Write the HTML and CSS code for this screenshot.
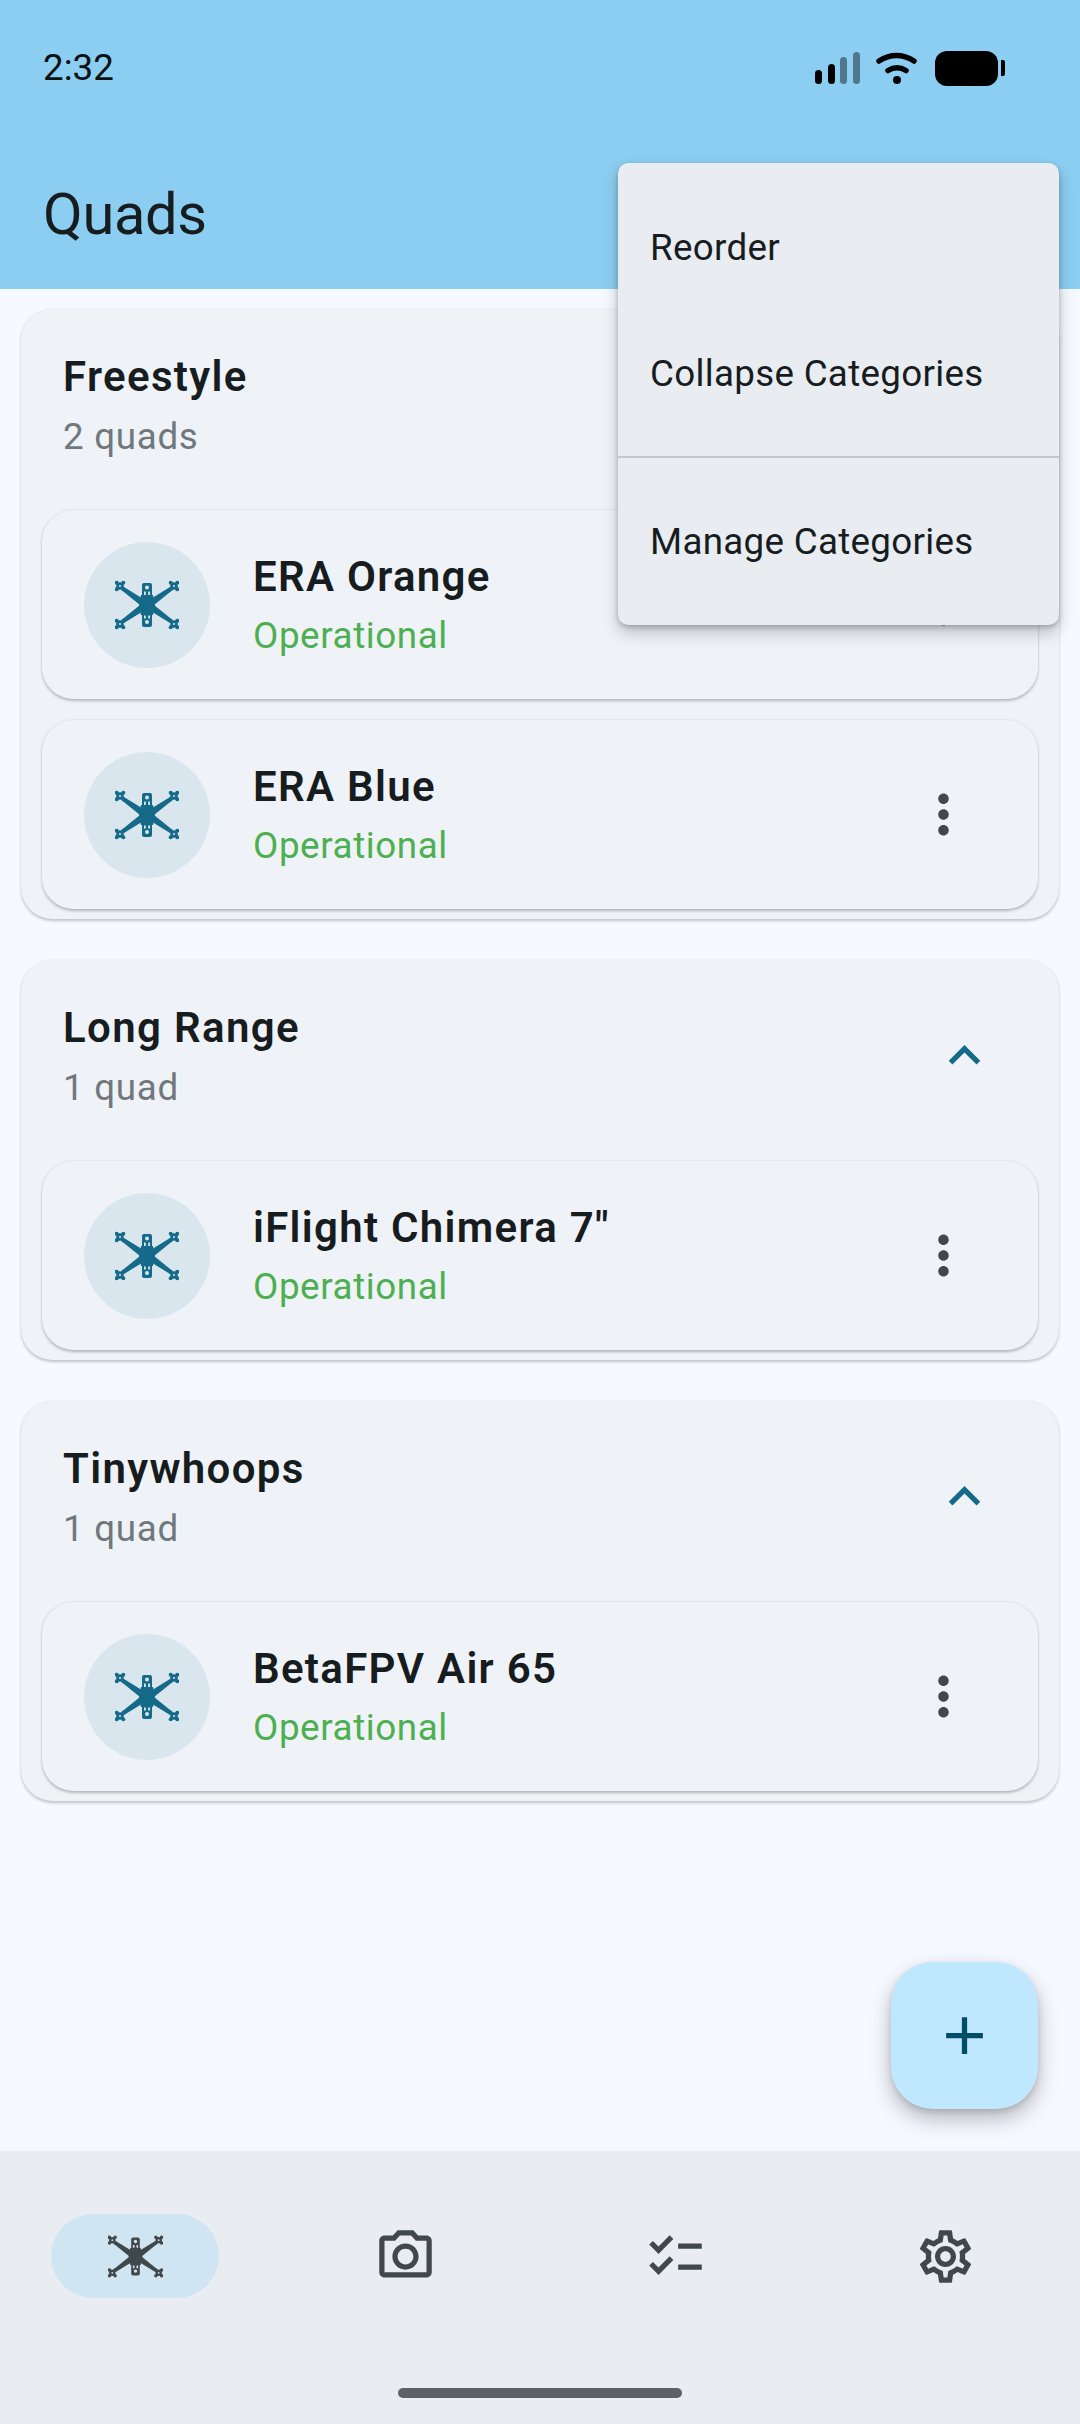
FILE: index.html
```html
<!DOCTYPE html>
<html lang="en">
<head>
<meta charset="utf-8">
<title>Quads</title>
<link rel="stylesheet" href="styles.css">
</head>
<body>
<svg class="defs" xmlns="http://www.w3.org/2000/svg">
  <symbol id="motor" viewBox="-7 -7 14 14" overflow="visible">
    <circle cx="-3.300" cy="-3.300" r="2"/><circle cx="3.300" cy="-3.300" r="2"/><circle cx="-3.300" cy="3.300" r="2"/><circle cx="3.300" cy="3.300" r="2"/>
    <path fill-rule="evenodd" d="M-3.800 0a3.800 3.800 0 1 0 7.600 0a3.800 3.800 0 1 0-7.600 0Z M-1 0a1 1 0 1 0 2 0a1 1 0 1 0-2 0Z"/>
  </symbol>
  <symbol id="drone" viewBox="-32 -26 64 52">
    <g fill="currentColor">
      <path fill-rule="evenodd" d="M-3-22H3Q5-22 5-20V20Q5 22 3 22H-3Q-5 22-5 20V-20Q-5-22-3-22Z M-2-17.500a2 2 0 1 0 4 0a2 2 0 1 0-4 0Z M-3-13.500h1.800v3.400H-3Z M1.200-13.500H3v3.400H1.200Z M-3 10.600h1.800v3H-3Z M1.200 10.600H3v3H1.200Z M-2 17a2 2 0 1 0 4 0a2 2 0 1 0-4 0Z"/>
      <path d="M-6-10H6L8 0 6 10H-6L-8 0Z"/>
      <path d="M-6-7.500-23-18-25-14.500-7 0Z M6-7.500 23-18 25-14.500 7 0Z M-6 7.500-23 18-25 14.500-7 0Z M6 7.500 23 18 25 14.500 7 0Z"/>
      <use href="#motor" x="-34" y="-26" width="14" height="14"/>
      <use href="#motor" x="20" y="-26" width="14" height="14"/>
      <use href="#motor" x="-34" y="12" width="14" height="14"/>
      <use href="#motor" x="20" y="12" width="14" height="14"/>
    </g>
  </symbol>
  <symbol id="chev" viewBox="0 0 24 24"><path d="M12 8l-6 6 1.410 1.410L12 10.830l4.590 4.580L18 14z"/></symbol>
  <symbol id="more" viewBox="0 0 24 24"><path d="M12 8c1.100 0 2-.9 2-2s-.9-2-2-2-2 .9-2 2 .9 2 2 2zm0 2c-1.100 0-2 .9-2 2s.9 2 2 2 2-.9 2-2-.9-2-2-2zm0 6c-1.100 0-2 .9-2 2s.9 2 2 2 2-.9 2-2-.9-2-2-2z"/></symbol>
</svg>

<header class="appbar">
  <div class="status">
    <span class="time">2:32</span>
    <div class="status-icons">
      <div class="signal">
        <i class="bar b1"></i><i class="bar b2"></i><i class="bar b3 dim"></i><i class="bar b4 dim"></i>
      </div>
      <svg class="wifi" viewBox="0 0 44 34"><path d="M4 10Q21.500-1 39 10M13 19.500Q22 14 31 19.500" fill="none" stroke="#000" stroke-width="5.500" stroke-linecap="round"/><circle cx="22" cy="29" r="4"/></svg>
      <div class="battery"><i class="cell"></i><i class="nub"></i></div>
    </div>
  </div>
  <h1 class="title">Quads</h1>
</header>

<main class="list">
  <section class="group">
    <div class="group-head">
      <div><h2 class="group-name">Freestyle</h2><p class="group-count">2 quads</p></div>
      <svg class="chev"><use href="#chev"/></svg>
    </div>
    <article class="quad">
      <div class="avatar"><svg class="drone"><use href="#drone"/></svg></div>
      <div class="quad-text"><h3 class="quad-name">ERA Orange</h3><p class="quad-state">Operational</p></div>
      <svg class="more"><use href="#more"/></svg>
    </article>
    <article class="quad">
      <div class="avatar"><svg class="drone"><use href="#drone"/></svg></div>
      <div class="quad-text"><h3 class="quad-name">ERA Blue</h3><p class="quad-state">Operational</p></div>
      <svg class="more"><use href="#more"/></svg>
    </article>
  </section>
  <section class="group">
    <div class="group-head">
      <div><h2 class="group-name">Long Range</h2><p class="group-count">1 quad</p></div>
      <svg class="chev"><use href="#chev"/></svg>
    </div>
    <article class="quad">
      <div class="avatar"><svg class="drone"><use href="#drone"/></svg></div>
      <div class="quad-text"><h3 class="quad-name">iFlight Chimera 7"</h3><p class="quad-state">Operational</p></div>
      <svg class="more"><use href="#more"/></svg>
    </article>
  </section>
  <section class="group">
    <div class="group-head">
      <div><h2 class="group-name">Tinywhoops</h2><p class="group-count">1 quad</p></div>
      <svg class="chev"><use href="#chev"/></svg>
    </div>
    <article class="quad">
      <div class="avatar"><svg class="drone"><use href="#drone"/></svg></div>
      <div class="quad-text"><h3 class="quad-name">BetaFPV Air 65</h3><p class="quad-state">Operational</p></div>
      <svg class="more"><use href="#more"/></svg>
    </article>
  </section>
</main>

<nav class="nav">
  <div class="nav-row">
    <div class="nav-item"><span class="pill active"><svg class="drone"><use href="#drone"/></svg></span></div>
    <div class="nav-item"><span class="pill"><svg class="nav-icon" viewBox="0 0 24 24"><path d="M20 4h-3.170L15 2H9L7.170 4H4c-1.100 0-2 .9-2 2v12c0 1.100.9 2 2 2h16c1.100 0 2-.9 2-2V6c0-1.100-.9-2-2-2zm0 14H4V6h4.050l1.830-2h4.240l1.830 2H20v12zM12 7c-2.760 0-5 2.240-5 5s2.240 5 5 5 5-2.240 5-5-2.240-5-5-5zm0 8c-1.650 0-3-1.350-3-3s1.350-3 3-3 3 1.350 3 3-1.350 3-3 3z"/></svg></span></div>
    <div class="nav-item"><span class="pill"><svg class="nav-icon" viewBox="0 0 24 24"><path d="M22 7h-9v2h9V7zm0 8h-9v2h9v-2zM5.540 11L2 7.460l1.410-1.410 2.120 2.120 4.240-4.240 1.410 1.410L5.540 11zm0 8L2 15.460l1.410-1.410 2.120 2.120 4.240-4.240 1.410 1.410L5.540 19z"/></svg></span></div>
    <div class="nav-item"><span class="pill"><svg class="nav-icon" viewBox="0 0 24 24"><path d="M19.430 12.980c.04-.32.07-.64.07-.98 0-.34-.03-.66-.07-.98l2.110-1.650c.19-.15.24-.42.12-.64l-2-3.460c-.09-.16-.26-.25-.44-.25-.06 0-.12.01-.17.03l-2.490 1c-.52-.4-1.080-.73-1.690-.98l-.38-2.650C14.460 2.180 14.250 2 14 2h-4c-.25 0-.46.18-.49.42l-.38 2.650c-.61.25-1.170.59-1.690.98l-2.490-1c-.06-.02-.12-.03-.18-.03-.17 0-.34.09-.43.25l-2 3.460c-.13.22-.07.49.12.64l2.110 1.650c-.04.32-.07.65-.07.98 0 .33.03.66.07.98l-2.110 1.650c-.19.15-.24.42-.12.64l2 3.460c.09.16.26.25.44.25.06 0 .12-.01.17-.03l2.490-1c.52.4 1.080.73 1.690.98l.38 2.650c.03.24.24.42.49.42h4c.25 0 .46-.18.49-.42l.38-2.650c.61-.25 1.170-.59 1.690-.98l2.490 1c.06.02.12.03.18.03.17 0 .34-.09.43-.25l2-3.460c.12-.22.07-.49-.12-.64l-2.110-1.650zm-1.980-1.710c.04.31.05.52.05.73 0 .21-.02.43-.05.73l-.14 1.130.89.7 1.080.84-.7 1.210-1.270-.51-1.040-.42-.9.68c-.43.32-.84.56-1.250.73l-1.060.43-.16 1.130-.2 1.350h-1.400l-.19-1.350-.16-1.130-1.060-.43c-.43-.18-.83-.41-1.230-.71l-.91-.7-1.060.43-1.270.51-.7-1.210 1.080-.84.89-.7-.14-1.130c-.03-.31-.05-.54-.05-.74s.02-.43.05-.73l.14-1.130-.89-.7-1.080-.84.7-1.210 1.270.51 1.040.42.9-.68c.43-.32.84-.56 1.250-.73l1.060-.43.16-1.130.2-1.350h1.390l.19 1.350.16 1.130 1.060.43c.43.18.83.41 1.230.71l.91.7 1.060-.43 1.270-.51.7 1.210-1.070.85-.89.7.14 1.130zM12 8c-2.210 0-4 1.790-4 4s1.790 4 4 4 4-1.790 4-4-1.790-4-4-4zm0 6c-1.100 0-2-.9-2-2s.9-2 2-2 2 .9 2 2-.9 2-2 2z"/></svg></span></div>
  </div>
  <div class="home-indicator"></div>
</nav>

<button class="fab" type="button"><svg class="fab-icon" viewBox="0 0 24 24"><path d="M19 13h-6v6h-2v-6H5v-2h6V5h2v6h6v2z"/></svg></button>

<div class="menu">
  <div class="menu-item">Reorder</div>
  <div class="menu-item">Collapse Categories</div>
  <div class="menu-divider"></div>
  <div class="menu-item">Manage Categories</div>
</div>
</body>
</html>
```

FILE: styles.css
```css
* { box-sizing: border-box; }
html, body { margin: 0; padding: 0; }
body {
  position: relative;
  width: 1080px;
  height: 2424px;
  overflow: hidden;
  display: flex;
  flex-direction: column;
  background: #f6f9ff;
  color: #171c1f;
  font-family: Roboto, "Noto Sans", sans-serif;
}
h1, h2, h3, p { margin: 0; font-weight: inherit; }
.defs { display: none; }

.appbar {
  height: 289px;
  flex: none;
  background: #8bcef1;
}
.status {
  height: 136px;
  display: flex;
  align-items: center;
  justify-content: space-between;
  padding: 0 75px 0 43px;
}
.time { font-size: 36.75px; color: #0c1214; padding-bottom: 2px; }
.status-icons { display: flex; align-items: flex-end; }
.signal { display: flex; align-items: flex-end; gap: 5.7px; height: 32px; margin-bottom: 1.5px; }
.bar { display: block; width: 7px; border-radius: 3.5px; background: #000; }
.b1 { height: 14px; }
.b2 { height: 20px; }
.b3 { height: 27px; }
.b4 { height: 32px; }
.dim { background: #51778d; }
.wifi { width: 44px; height: 34px; margin-left: 15px; margin-bottom: 1px; }
.battery { display: flex; align-items: center; margin-left: 16px; height: 35px; }
.cell { display: block; width: 63px; height: 35px; border-radius: 12px; background: #000; }
.nub { display: block; width: 4px; height: 16px; margin-left: 3px; background: #000; border-radius: 0 2px 2px 0; }
.title {
  font-size: 57.75px;
  line-height: 75px;
  padding: 41px 0 0 43px;
  letter-spacing: -.3px;
  color: #171c1f;
}

.list {
  flex: 1;
  display: flex;
  flex-direction: column;
  gap: 41px;
  padding: 20px 21px 0;
}
.group {
  background: #eff3f8;
  border-radius: 31.5px;
  padding: 0 21px 10px;
  box-shadow: 0 1.5px 3px rgba(0, 0, 0, .22), 0 0 1px rgba(0, 0, 0, .03);
}
.group-head {
  height: 201px;
  padding: 0 10px 10px 21px;
  display: flex;
  align-items: center;
  justify-content: space-between;
}
.group-name {
  font-size: 42px;
  line-height: 55px;
  font-weight: 600;
  letter-spacing: 1.35px;
}
.group-count {
  margin-top: 8px;
  font-size: 36.75px;
  line-height: 49px;
  color: #70787c;
  letter-spacing: .7px;
}
.chev { width: 63px; height: 63px; margin-right: 32px; fill: #146a88; }

.quad {
  height: 189px;
  display: flex;
  align-items: center;
  padding: 0 63.500px 0 42px;
  border-radius: 31.5px;
  background: #eff3f8;
  box-shadow: 0 1.5px 3px rgba(0, 0, 0, .25), 0 0 1px rgba(0, 0, 0, .04);
}
.quad + .quad { margin-top: 21px; }
.avatar {
  width: 126px;
  height: 126px;
  border-radius: 50%;
  background: #d9e6ee;
  color: #146a88;
  display: flex;
  align-items: center;
  justify-content: center;
  flex: none;
}
.drone { width: 64px; height: 52px; display: block; }
.quad-text { flex: 1; margin-left: 43px; }
.quad-name {
  font-size: 42px;
  line-height: 56px;
  font-weight: 600;
  letter-spacing: 1.3px;
}
.quad-state {
  margin-top: 6px;
  font-size: 36.75px;
  line-height: 49px;
  color: #4caf50;
  letter-spacing: .6px;
}
.more { width: 63px; height: 63px; fill: #40484c; flex: none; }

.nav {
  height: 273px;
  flex: none;
  background: #e9edf2;
  padding-top: 63px;
  display: flex;
  flex-direction: column;
  align-items: center;
}
.nav-row { display: flex; width: 100%; }
.nav-item { flex: 1; display: flex; justify-content: center; }
.pill {
  width: 168px;
  height: 84px;
  border-radius: 42px;
  display: flex;
  align-items: center;
  justify-content: center;
  color: #40484c;
}
.pill .drone { width: 55px; height: 45px; }
.active { background: #cfe6f2; }
.nav-icon { width: 63px; height: 63px; fill: #40484c; }
.home-indicator {
  width: 284px;
  height: 10px;
  margin-top: 90px;
  border-radius: 5px;
  background: #5e6063;
}

.fab {
  position: absolute;
  left: 891px;
  top: 1962px;
  width: 147px;
  height: 147px;
  padding: 0;
  border: 0;
  border-radius: 42px;
  background: #bfe8ff;
  display: flex;
  align-items: center;
  justify-content: center;
  box-shadow: 0 10px 22px rgba(0, 0, 0, .26), 0 3px 6px rgba(0, 0, 0, .12);
}
.fab-icon { width: 63px; height: 63px; fill: #004d67; }

.menu {
  position: absolute;
  left: 618px;
  top: 163px;
  width: 441px;
  padding: 21px 0;
  border-radius: 10.500px;
  background: #e9edf2;
  box-shadow: 0 8px 16px rgba(0, 0, 0, .22), 0 2px 5px rgba(0, 0, 0, .2);
}
.menu-item {
  height: 126px;
  display: flex;
  align-items: center;
  padding-left: 32px;
  font-size: 36.75px;
  font-weight: 450;
  color: #171c1f;
  letter-spacing: .3px;
}
.menu-divider { height: 42px; display: flex; align-items: center; }
.menu-divider::before { content: ""; display: block; width: 100%; height: 2px; background: #c0c8cc; }
```
